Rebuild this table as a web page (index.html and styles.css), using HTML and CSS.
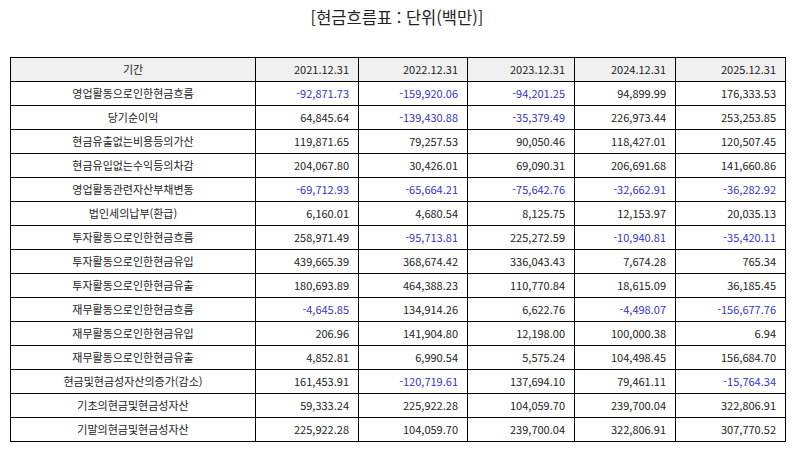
FILE: index.html
```html
<!DOCTYPE html>
<html lang="ko">
<head>
<meta charset="utf-8">
<title>현금흐름표</title>
<link rel="stylesheet" href="styles.css">
</head>
<body>
<div class="title">[현금흐름표 : 단위(백만)]</div>
<table class="cf">
<colgroup>
<col class="c-label"><col class="c1"><col class="c2"><col class="c3"><col class="c4"><col class="c5">
</colgroup>
<thead>
<tr><th class="label">기간</th><th>2021.12.31</th><th>2022.12.31</th><th>2023.12.31</th><th>2024.12.31</th><th>2025.12.31</th></tr>
</thead>
<tbody>
<tr><td class="label">영업활동으로인한현금흐름</td><td class="neg">-92,871.73</td><td class="neg">-159,920.06</td><td class="neg">-94,201.25</td><td>94,899.99</td><td>176,333.53</td></tr>
<tr><td class="label">당기순이익</td><td>64,845.64</td><td class="neg">-139,430.88</td><td class="neg">-35,379.49</td><td>226,973.44</td><td>253,253.85</td></tr>
<tr><td class="label">현금유출없는비용등의가산</td><td>119,871.65</td><td>79,257.53</td><td>90,050.46</td><td>118,427.01</td><td>120,507.45</td></tr>
<tr><td class="label">현금유입없는수익등의차감</td><td>204,067.80</td><td>30,426.01</td><td>69,090.31</td><td>206,691.68</td><td>141,660.86</td></tr>
<tr><td class="label">영업활동관련자산부채변동</td><td class="neg">-69,712.93</td><td class="neg">-65,664.21</td><td class="neg">-75,642.76</td><td class="neg">-32,662.91</td><td class="neg">-36,282.92</td></tr>
<tr><td class="label">법인세의납부(환급)</td><td>6,160.01</td><td>4,680.54</td><td>8,125.75</td><td>12,153.97</td><td>20,035.13</td></tr>
<tr><td class="label">투자활동으로인한현금흐름</td><td>258,971.49</td><td class="neg">-95,713.81</td><td>225,272.59</td><td class="neg">-10,940.81</td><td class="neg">-35,420.11</td></tr>
<tr><td class="label">투자활동으로인한현금유입</td><td>439,665.39</td><td>368,674.42</td><td>336,043.43</td><td>7,674.28</td><td>765.34</td></tr>
<tr><td class="label">투자활동으로인한현금유출</td><td>180,693.89</td><td>464,388.23</td><td>110,770.84</td><td>18,615.09</td><td>36,185.45</td></tr>
<tr><td class="label">재무활동으로인한현금흐름</td><td class="neg">-4,645.85</td><td>134,914.26</td><td>6,622.76</td><td class="neg">-4,498.07</td><td class="neg">-156,677.76</td></tr>
<tr><td class="label">재무활동으로인한현금유입</td><td>206.96</td><td>141,904.80</td><td>12,198.00</td><td>100,000.38</td><td>6.94</td></tr>
<tr><td class="label">재무활동으로인한현금유출</td><td>4,852.81</td><td>6,990.54</td><td>5,575.24</td><td>104,498.45</td><td>156,684.70</td></tr>
<tr><td class="label">현금및현금성자산의증가(감소)</td><td>161,453.91</td><td class="neg">-120,719.61</td><td>137,694.10</td><td>79,461.11</td><td class="neg">-15,764.34</td></tr>
<tr><td class="label">기초의현금및현금성자산</td><td>59,333.24</td><td>225,922.28</td><td>104,059.70</td><td>239,700.04</td><td>322,806.91</td></tr>
<tr><td class="label">기말의현금및현금성자산</td><td>225,922.28</td><td>104,059.70</td><td>239,700.04</td><td>322,806.91</td><td>307,770.52</td></tr>
</tbody>
</table>
</body>
</html>
```
FILE: styles.css
```css
html, body {
  margin: 0;
  padding: 0;
  background: #ffffff;
}
body {
  font-family: "Noto Sans CJK KR", "Noto Sans", sans-serif;
  color: #222222;
}
.title {
  padding-top: 7px;
  height: 20px;
  line-height: 20px;
  font-size: 16.5px;
  text-align: center;
  color: #222222;
}
.cf {
  margin: 30px 0 0 10px;
  width: 775px;
  table-layout: fixed;
  border-collapse: collapse;
  font-size: 11px;
}
.c-label { width: 245px; }
.c1 { width: 103px; }
.c2 { width: 109px; }
.c3 { width: 107px; }
.c4 { width: 101px; }
.c5 { width: 110px; }
.cf th,
.cf td {
  border: 1px solid #000000;
  padding: 0 9px 0 0;
  height: 23px;
  line-height: 23px;
  text-align: right;
  font-weight: normal;
  white-space: nowrap;
  color: #222222;
}
.cf thead th {
  background: #f0f0f0;
}
.cf .label {
  text-align: center;
  padding: 0;
}
.cf td.neg {
  color: #3535c8;
}
```
